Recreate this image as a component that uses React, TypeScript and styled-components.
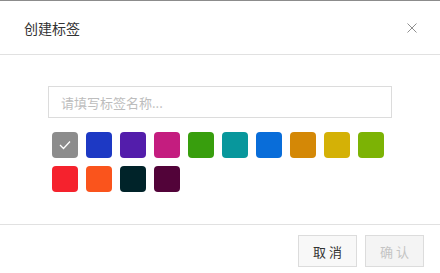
import React, { useState } from "react";
import styled, { createGlobalStyle } from "styled-components";

const Global = createGlobalStyle`
  html, body { margin: 0; padding: 0; background: #fff; }
  body { font-family: "Noto Sans CJK SC", "Noto Sans", sans-serif; }
  * { box-sizing: border-box; }
`;

const Modal = styled.div`
  width: 440px;
  height: 273px;
  border-top: 1px solid #8c8c8c;
  background: #fff;
  display: flex;
  flex-direction: column;
`;

const Header = styled.div`
  height: 54px;
  border-bottom: 1px solid #e1e1e1;
  display: flex;
  align-items: center;
  justify-content: space-between;
  padding: 0 23px 0 24px;
`;

const Title = styled.div`
  font-size: 14px;
  color: #333;
  line-height: 20px;
`;

const Close = styled.button`
  border: none;
  background: none;
  padding: 0;
  width: 10px;
  height: 10px;
  display: flex;
  cursor: pointer;
`;

const Body = styled.div`
  flex: 1;
  padding: 31px 48px 0 48px;
  border-bottom: 1px solid #e1e1e1;
`;

const Input = styled.input`
  width: 344px;
  height: 32px;
  border: 1px solid #dcdcdc;
  padding: 0 12px;
  font-family: inherit;
  font-size: 13px;
  color: #333;
  outline: none;
  &::placeholder { color: #bdbdbd; }
`;

const Swatches = styled.div`
  display: flex;
  flex-wrap: wrap;
  gap: 8px;
  padding: 0 4px;
  margin-top: 14px;
`;

const Swatch = styled.div<{ $c: string }>`
  width: 26px;
  height: 26px;
  border-radius: 4px;
  background: ${(p) => p.$c};
  display: flex;
  align-items: center;
  justify-content: center;
  cursor: pointer;
`;

const Footer = styled.div`
  height: 48px;
  display: flex;
  justify-content: flex-end;
  align-items: flex-start;
  gap: 8px;
  padding: 10px 16px 0 0;
`;

const Btn = styled.button<{ $disabled?: boolean }>`
  height: 32px;
  width: 59px;
  border: 1px solid #dcdcdc;
  background: ${(p) => (p.$disabled ? "#f4f4f4" : "#f8f8f8")};
  color: ${(p) => (p.$disabled ? "#c4c4c4" : "#333")};
  font-family: inherit;
  font-size: 13px;
  padding: 0;
  cursor: ${(p) => (p.$disabled ? "not-allowed" : "pointer")};
`;

const colors = [
  "#8c8c8c", "#1d39c4", "#531dab", "#c41d7f", "#389e0d", "#08979c", "#096dd9",
  "#d48806", "#d4b106", "#7cb305", "#f5222d", "#fa541c", "#002329", "#520339",
];

export default function App() {
  const [sel, setSel] = useState(0);
  return (
    <>
      <Global />
      <Modal>
        <Header>
          <Title>创建标签</Title>
          <Close aria-label="close">
            <svg width="10" height="10" viewBox="0 0 10 10">
              <path d="M0.5 0.5 L9.5 9.5 M9.5 0.5 L0.5 9.5" stroke="#8f8f8f" strokeWidth="1" fill="none" />
            </svg>
          </Close>
        </Header>
        <Body>
          <Input placeholder="请填写标签名称..." />
          <Swatches>
            {colors.map((c, i) => (
              <Swatch key={c} $c={c} onClick={() => setSel(i)}>
                {sel === i && (
                  <svg width="12" height="10" viewBox="0 0 12 10">
                    <polyline points="1,5 4.5,8.5 11,1.5" stroke="#fff" strokeWidth="1.3" fill="none" />
                  </svg>
                )}
              </Swatch>
            ))}
          </Swatches>
        </Body>
        <Footer>
          <Btn>取 消</Btn>
          <Btn $disabled>确 认</Btn>
        </Footer>
      </Modal>
    </>
  );
}
